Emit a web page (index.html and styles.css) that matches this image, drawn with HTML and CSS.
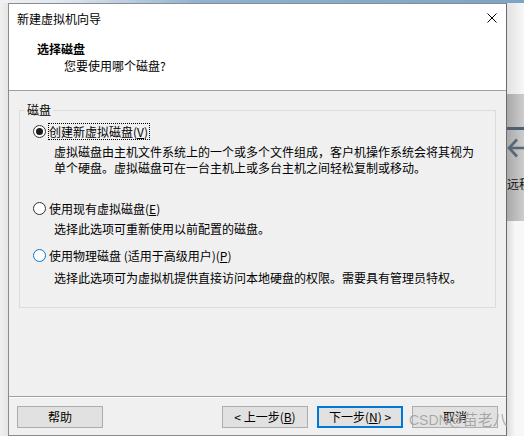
FILE: index.html
```html
<!DOCTYPE html>
<html lang="zh-CN">
<head>
<meta charset="utf-8">
<title>新建虚拟机向导</title>
<link rel="stylesheet" href="styles.css">
</head>
<body>
<div class="screen">
  <div class="topline"></div>
  <div class="desk">
    <div class="leftgap"></div>
    <div class="dialog">
      <div class="header">
        <div class="titlebar">
          <span class="title">新建虚拟机向导</span>
          <svg class="close" width="10" height="10" viewBox="0 0 10 10"><path d="M0.5 0.5 L9.5 9.5 M9.5 0.5 L0.5 9.5" stroke="#000" stroke-width="1" fill="none"/></svg>
        </div>
        <div class="heading">选择磁盘</div>
        <div class="subheading">您要使用哪个磁盘?</div>
      </div>
      <div class="body">
        <fieldset class="group">
          <legend class="legend">磁盘</legend>
          <div class="option first">
            <span class="radio checked"></span>
            <span class="label focus">创建新虚拟磁盘(<u>V</u>)</span>
          </div>
          <div class="desc">虚拟磁盘由主机文件系统上的一个或多个文件组成，客户机操作系统会将其视为<br>单个硬盘。虚拟磁盘可在一台主机上或多台主机之间轻松复制或移动。</div>
          <div class="option second">
            <span class="radio"></span>
            <span class="label">使用现有虚拟磁盘(<u>E</u>)</span>
          </div>
          <div class="desc">选择此选项可重新使用以前配置的磁盘。</div>
          <div class="option third">
            <span class="radio hover"></span>
            <span class="label">使用物理磁盘 (适用于高级用户)(<u>P</u>)</span>
          </div>
          <div class="desc last">选择此选项可为虚拟机提供直接访问本地硬盘的权限。需要具有管理员特权。</div>
        </fieldset>
      </div>
      <div class="footer">
        <button class="btn">帮助</button>
        <div class="spacer"></div>
        <button class="btn">&lt; 上一步(<u>B</u>)</button>
        <button class="btn default">下一步(<u>N</u>) &gt;</button>
        <button class="btn">取消</button>
        <span class="watermark"><span class="wm-latin">CSDN</span>@苗老八</span>
      </div>
    </div>
    <div class="side">
      <div class="side-top"></div>
      <div class="side-band">
        <div class="side-bar"></div>
        <svg class="side-arrow" width="26" height="20" viewBox="0 0 26 20"><path d="M10 1.5 L2 10 L10 18.5 M2 10 H26" stroke="#566677" stroke-width="2.6" fill="none"/></svg>
        <div class="side-text">远程</div>
      </div>
      <div class="side-bottom"></div>
    </div>
  </div>
</div>
</body>
</html>
```

FILE: styles.css
```css
html, body {
  margin: 0;
  padding: 0;
}
body {
  width: 524px;
  height: 436px;
  overflow: hidden;
  background: #f0f0f0;
  font-family: "Noto Sans CJK SC", "Microsoft YaHei", "Noto Sans", sans-serif;
  font-size: 12px;
  color: #000;
}
.screen {
  display: flex;
  flex-direction: column;
  width: 524px;
  height: 436px;
}
.topline {
  height: 3px;
  background: linear-gradient(to right, #eef1f4 0px, #dfe7ee 60px, #8fb2d0 200px, #7ba4c7 524px);
}
.desk {
  display: flex;
  height: 433px;
}
.leftgap {
  width: 8px;
  background: linear-gradient(to right, #f0f0f0, #e6e6e6);
}
.dialog {
  width: 499px;
  height: 433px;
  box-sizing: border-box;
  border: 1px solid #8c8c8c;
  border-right-color: #6c6c6c;
  display: flex;
  flex-direction: column;
  background: #f0f0f0;
  position: relative;
}
.header {
  background: #fff;
  height: 87px;
  box-sizing: border-box;
  border-bottom: 1px solid #a0a0a0;
}
.titlebar {
  height: 30px;
  display: flex;
  align-items: center;
  justify-content: space-between;
  padding: 0 9px 0 8px;
}
.title {
  line-height: 16px;
}
.close {
  margin-bottom: 2px;
}
.heading {
  margin-top: 7px;
  padding-left: 28px;
  line-height: 16px;
  font-weight: bold;
}
.subheading {
  margin-top: 1px;
  padding-left: 55px;
  line-height: 16px;
}
.body {
  flex: 1;
  padding: 11px 10px 0 10px;
}
.group {
  margin: 0;
  border: 1px solid #dcdcdc;
  padding: 0 10px 21px 5px;
  min-inline-size: 0;
}
.legend {
  padding: 0 2px;
  line-height: 16px;
}
.option {
  display: flex;
  align-items: center;
  margin-left: 8px;
  height: 17px;
}
.option.first {
  margin-top: 5px;
}
.option.second {
  margin-top: 24px;
}
.option.third {
  margin-top: 10px;
}
.radio {
  width: 13px;
  height: 13px;
  box-sizing: border-box;
  border: 1px solid #333;
  border-radius: 50%;
  background: #fff;
  display: flex;
  align-items: center;
  justify-content: center;
  flex: none;
}
.radio.checked::after {
  content: "";
  width: 7px;
  height: 7px;
  border-radius: 50%;
  background: #1a1a1a;
}
.radio.hover {
  border-color: #0078d7;
}
.label {
  margin-left: 2px;
  line-height: 15px;
  border: 1px solid transparent;
  padding: 0 1px 0 0;
  white-space: nowrap;
}
.label.focus {
  border: 1px dotted #000;
}
.desc {
  margin-top: 4px;
  margin-left: 29px;
  line-height: 16px;
  white-space: nowrap;
}
.desc.last {
  margin-top: 6px;
}
.footer {
  position: relative;
  display: flex;
  border-top: 1px solid #a0a0a0;
  box-shadow: inset 0 1px 0 #ffffff;
  padding: 9px 8px 7px 8px;
}
.spacer {
  flex: 1;
}
.btn {
  width: 86px;
  height: 22px;
  box-sizing: border-box;
  border: 1px solid #adadad;
  background: #e1e1e1;
  font-family: "Noto Sans CJK SC", "Microsoft YaHei", "Noto Sans", sans-serif;
  font-size: 12px;
  color: #000;
  padding: 0;
  margin: 0 0 0 9px;
  line-height: 16px;
}
.btn:first-child {
  margin-left: 0;
}
.btn.default {
  border: 2px solid #0078d7;
}
.watermark {
  position: absolute;
  left: 400px;
  top: 12px;
  line-height: 20px;
  font-size: 15px;
  color: rgba(140, 140, 140, 0.75);
  white-space: nowrap;
  text-shadow: 0 0 1px rgba(255, 255, 255, 0.6);
}
.wm-latin {
  font-family: "Liberation Sans", "Noto Sans", sans-serif;
  font-size: 14px;
}
.side {
  flex: 1;
  display: flex;
  flex-direction: column;
  overflow: hidden;
  box-shadow: inset 3px 0 3px -1px rgba(0, 0, 0, 0.25);
}
.side-top {
  height: 91px;
  background: linear-gradient(to right, #e2e2e2, #f7f7f7);
}
.side-band {
  height: 127px;
  box-sizing: border-box;
  padding-top: 33px;
  background: linear-gradient(to right, #a9a9a9, #cdcdcd);
  display: flex;
  flex-direction: column;
}
.side-bar {
  height: 3px;
  background: #4d5e6f;
}
.side-arrow {
  display: block;
  margin-top: 8px;
  flex: none;
}
.side-text {
  margin-top: 18px;
  line-height: 16px;
  white-space: nowrap;
  color: #111;
}
.side-bottom {
  flex: 1;
  background: linear-gradient(to right, #dcdcdc, #f7f7f7 8px, #f8f8f8);
}
```
